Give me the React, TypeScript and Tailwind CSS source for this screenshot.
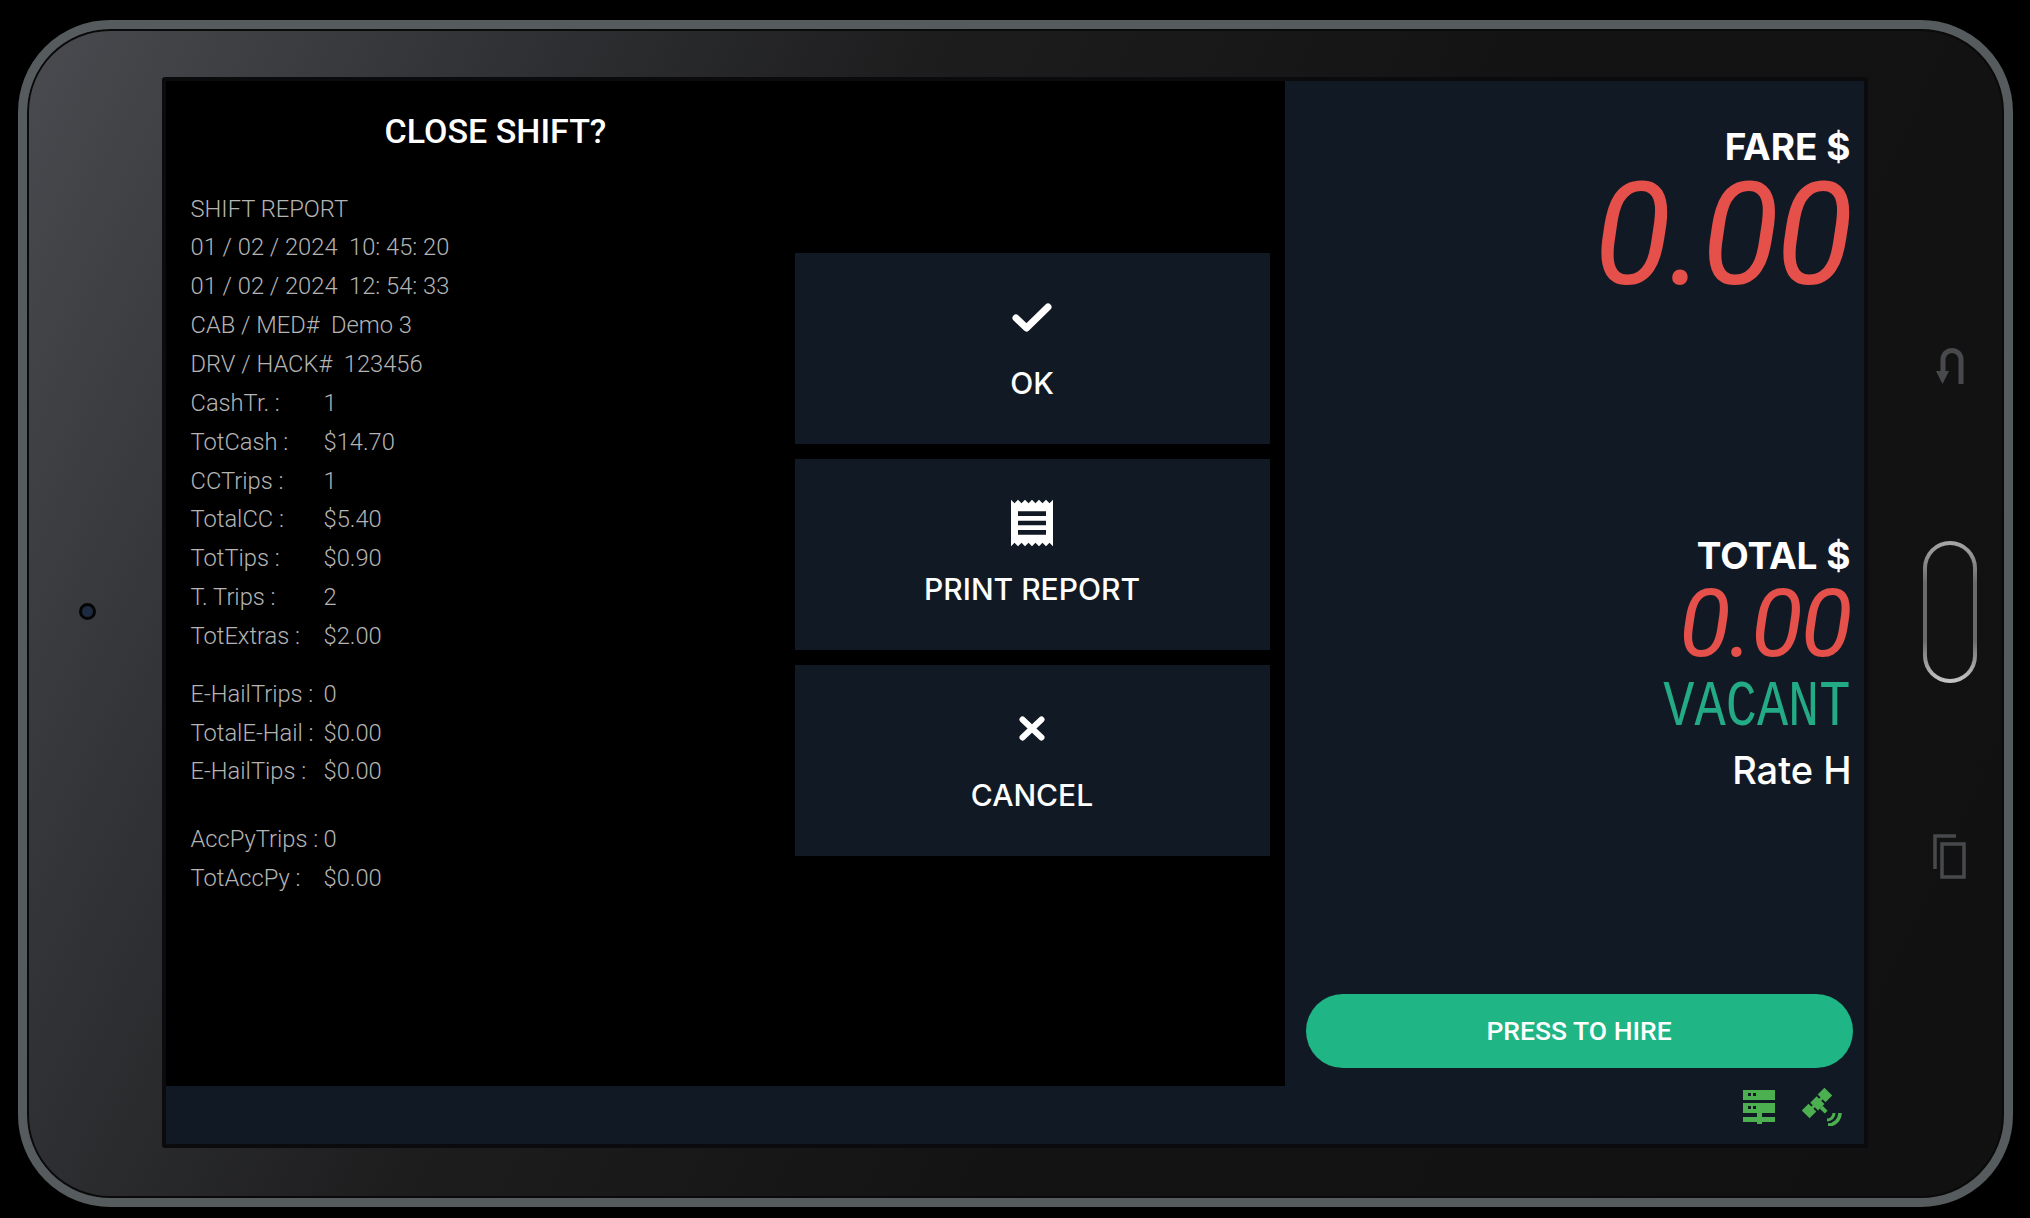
import { MdReceipt } from 'react-icons/md';

const labelFont = "font-['Inter',sans-serif]";

const reportTop = [
    'SHIFT REPORT',
    '01 / 02 / 2024  10: 45: 20',
    '01 / 02 / 2024  12: 54: 33',
    'CAB / MED#  Demo 3',
    'DRV / HACK#  123456',
];

const reportTotals = [
    ['CashTr. :', '1'],
    ['TotCash :', '$14.70'],
    ['CCTrips :', '1'],
    ['TotalCC :', '$5.40'],
    ['TotTips :', '$0.90'],
    ['T. Trips :', '2'],
    ['TotExtras :', '$2.00'],
];

const reportEhail = [
    ['E-HailTrips :', '0'],
    ['TotalE-Hail :', '$0.00'],
    ['E-HailTips :', '$0.00'],
];

const reportAccount = [
    ['AccPyTrips :', '0'],
    ['TotAccPy :', '$0.00'],
];

const ReportRows = ({ rows }: { rows: string[][] }) => (
    <div>
        {rows.map(([label, value]) => (
            <div key={label} className="flex h-[38.85px] items-center">
                <span className="w-[133px] shrink-0">{label}</span>
                <span>{value}</span>
            </div>
        ))}
    </div>
);

const CheckIcon = () => (
    <svg width="40" height="30" viewBox="0 0 40 30" fill="none" stroke="white" strokeWidth="7" strokeLinecap="round" strokeLinejoin="round">
        <path d="M4 15 L14.5 25 L36 4" />
    </svg>
);

const CloseIcon = () => (
    <svg width="26" height="25" viewBox="0 0 26 25" fill="none" stroke="white" strokeWidth="6" strokeLinecap="round">
        <path d="M3.5 3.5 L22.5 21.5 M22.5 3.5 L3.5 21.5" />
    </svg>
);

const ServerIcon = () => (
    <svg width="32" height="34" viewBox="0 0 32 34" fill="#4caf50">
        <path d="M0 0h32v10H0zM0 13h32v10H0zM14 23h5v4h13v5H19v2h-5v-2H0v-5h14z" />
        <path fill="#111a24" d="M5 3h3v3H5zM10 3h3v3h-3zM5 16h3v3H5zM10 16h3v3h-3z" />
    </svg>
);

const SatelliteIcon = () => (
    <svg width="40" height="39" viewBox="0 0 40 39" fill="#4caf50">
        <g transform="translate(15 16) rotate(-45)">
            <rect x="6.5" y="-5.5" width="9.5" height="11" />
            <rect x="-16" y="-5.5" width="9.5" height="11" />
            <rect x="-7" y="-1.5" width="14" height="3" />
            <rect x="-4.5" y="-5" width="9" height="11" />
            <rect x="-2" y="6" width="4" height="7" />
        </g>
        <path fill="none" stroke="#4caf50" strokeWidth="3" d="M32 26a7 7 0 0 1-7 7" />
        <path fill="none" stroke="#4caf50" strokeWidth="3.5" d="M38 26a12 12 0 0 1-12 12" />
    </svg>
);

const BackIcon = () => (
    <svg width="28" height="36" viewBox="0 0 28 36" fill="none" stroke="#48494c" strokeWidth="5">
        <path d="M25 36V11.5a9 9 0 0 0-18 0V24" />
        <path fill="#48494c" stroke="none" d="M0 23h13l-6.5 13z" />
    </svg>
);

const CopyIcon = () => (
    <svg width="33" height="45" viewBox="0 0 33 45" fill="none" stroke="#48494c" strokeWidth="3.5">
        <path d="M2 35V2h21" />
        <path d="M9 10h22v33H9z" />
    </svg>
);

const ActionButton = ({ icon, label, iconBox }: { icon: React.ReactNode; label: string; iconBox: string }) => (
    <button className="flex h-[191px] w-[475px] flex-col items-center bg-[#111a24] text-white">
        <div className={`flex items-center justify-center ${iconBox}`}>{icon}</div>
        <span className={`${labelFont} text-[30px] leading-[36px] font-medium`}>{label}</span>
    </button>
);

export default function App() {
    return (
        <div className="flex h-[1218px] w-[2030px] items-start justify-center bg-black pt-[20px]">
            {/* tablet body */}
            <div className="flex h-[1187px] w-[1995px] rounded-[92px] border-[9px] border-[#565b5e] bg-[linear-gradient(115deg,#4a4b50_0%,#323336_18%,#1d1d1e_36%,#131313_60%,#111111_100%)] shadow-[inset_0_0_0_2px_#0a0a0a]">
                <div className="flex w-[135px] shrink-0 items-center justify-center pb-[4px] pr-[14px]">
                    <div className="h-[17px] w-[17px] rounded-full border-[3px] border-[#050505] bg-[#1e2a40]" />
                </div>

                <div className="mt-[48px] flex h-[1071px] w-[1706px] shrink-0 rounded-[3px] border-[4px] border-[#0b0b0d] bg-[#111a24]">
                    {/* dialog */}
                    <div className="flex h-[1005px] w-[1119px] shrink-0 bg-black">
                        <div className="w-[629px] shrink-0 pl-[25px] pt-[28px] font-['Roboto',sans-serif]">
                            <div className="w-[610px] text-center text-[34px] leading-[44px] font-medium text-white">CLOSE SHIFT?</div>
                            <div className="mt-[37px] text-[23.7px] font-light whitespace-pre text-[#b4b4b4]">
                                {reportTop.map(row => (
                                    <div key={row} className="flex h-[38.85px] items-center">{row}</div>
                                ))}
                                <ReportRows rows={reportTotals} />
                                <div className="mt-[19px]"><ReportRows rows={reportEhail} /></div>
                                <div className="mt-[29px]"><ReportRows rows={reportAccount} /></div>
                            </div>
                        </div>
                        <div className="flex flex-col gap-[15px] pt-[172px]">
                            <ActionButton icon={<CheckIcon />} label="OK" iconBox="h-[30px] mt-[50px] mb-[32px]" />
                            <ActionButton icon={<MdReceipt size={56} />} label="PRINT REPORT" iconBox="h-[47px] mt-[40px] mb-[25px]" />
                            <ActionButton icon={<CloseIcon />} label="CANCEL" iconBox="h-[25px] mt-[51px] mb-[36px]" />
                        </div>
                    </div>

                    {/* meter */}
                    <div className="flex min-w-0 flex-1 flex-col items-end pb-[18px] pl-[21px] pr-[13px] pt-[41px] text-white">
                        <div className={`${labelFont} text-[37px] leading-[50px] font-bold`}>FARE $</div>
                        <div className="mt-[-1px] font-['Roboto',sans-serif] text-[142px] leading-[130px] tracking-[-3px] text-[#e5504b] italic">0.00</div>
                        <div className={`${labelFont} mt-[230px] text-[37px] leading-[50px] font-bold`}>TOTAL $</div>
                        <div className="mt-[1px] font-['Roboto',sans-serif] text-[95px] leading-[84px] tracking-[-2px] text-[#e5504b] italic">0.00</div>
                        <div className="mt-[13px] origin-center scale-y-[1.25] font-['Liberation_Mono',monospace] text-[52px] leading-[60px] text-[#23ab85]">VACANT</div>
                        <div className={`${labelFont} -mr-[1px] mt-[6px] text-[38px] leading-[50px] font-medium`}>Rate H</div>
                        <button className="-mr-[2px] mt-auto h-[74px] w-[547px] shrink-0 rounded-full bg-[#1fb584] font-['Roboto',sans-serif] text-[26.5px] font-medium text-white">PRESS TO HIRE</button>
                        <div className="mr-[9px] mt-[19px] flex items-center gap-[27px]">
                            <ServerIcon />
                            <SatelliteIcon />
                        </div>
                    </div>
                </div>

                <div className="flex flex-1 flex-col items-center pl-[28px] pt-[319px]">
                    <BackIcon />
                    <div className="mt-[157px] h-[142px] w-[54px] rounded-full bg-[linear-gradient(180deg,#a8a8a8,#6a6a6a_30%,#6a6a6a_70%,#c8c8c8)] p-[4px]">
                        <div className="h-full w-full rounded-full bg-[#131313]" />
                    </div>
                    <div className="mt-[151px]"><CopyIcon /></div>
                </div>
            </div>
        </div>
    );
}
